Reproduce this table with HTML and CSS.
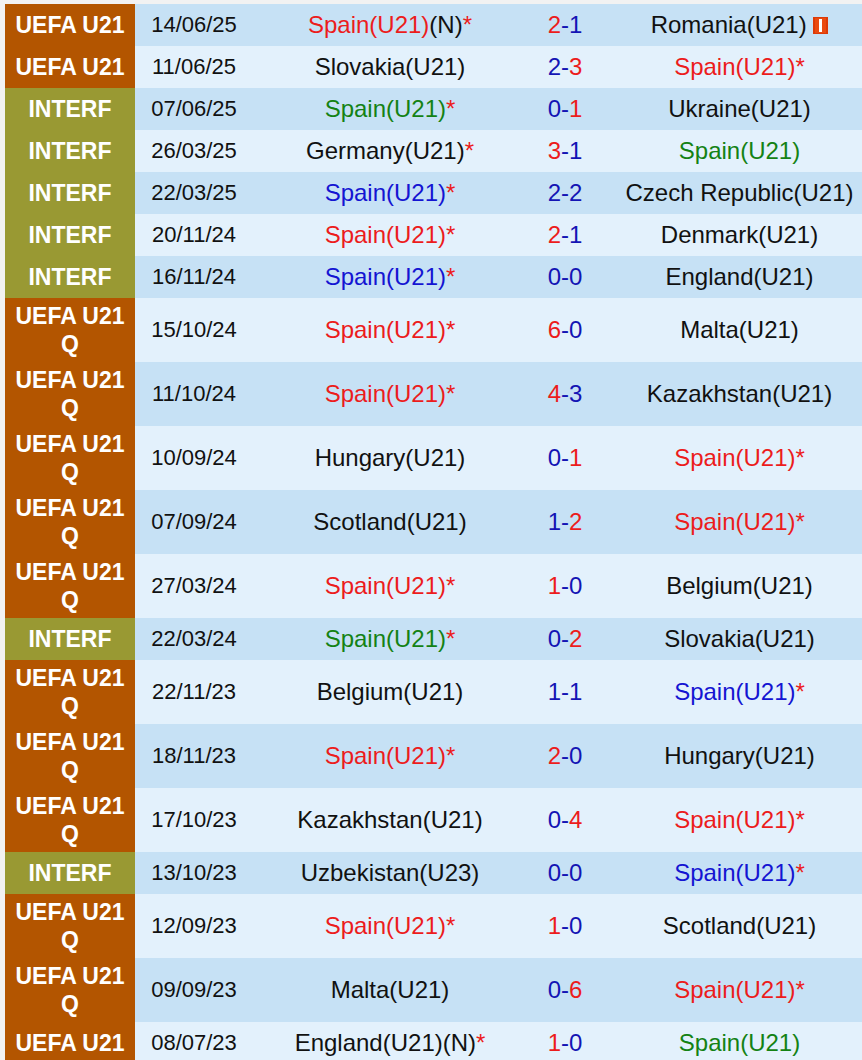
FILE: index.html
```html
<!DOCTYPE html>
<html>
<head>
<meta charset="utf-8">
<link rel="stylesheet" href="styles.css">
</head>
<body>
<table class="matches">
<colgroup>
<col class="c-comp"><col class="c-date"><col class="c-team"><col class="c-score"><col class="c-team2">
</colgroup>
<tbody>
<tr class="dark"><td class="comp uefa">UEFA U21</td><td class="date">14/06/25</td><td class="team"><span class="win">Spain(U21)</span>(N)<span class="star">*</span></td><td class="score"><span class="r">2</span><span class="b">-1</span></td><td class="team">Romania(U21) <svg class="card" width="15" height="17" viewBox="0 0 15 17"><rect x="0" y="0" width="15" height="17" fill="#dc3a08"/><rect x="2" y="1" width="11" height="15" fill="#ea4a10"/><rect x="6" y="2" width="3" height="13" fill="#fff"/></svg></td></tr>
<tr class="light"><td class="comp uefa">UEFA U21</td><td class="date">11/06/25</td><td class="team">Slovakia(U21)</td><td class="score"><span class="b">2-</span><span class="r">3</span></td><td class="team"><span class="win">Spain(U21)</span><span class="star">*</span></td></tr>
<tr class="dark"><td class="comp interf">INTERF</td><td class="date">07/06/25</td><td class="team"><span class="lose">Spain(U21)</span><span class="star">*</span></td><td class="score"><span class="b">0-</span><span class="r">1</span></td><td class="team">Ukraine(U21)</td></tr>
<tr class="light"><td class="comp interf">INTERF</td><td class="date">26/03/25</td><td class="team">Germany(U21)<span class="star">*</span></td><td class="score"><span class="r">3</span><span class="b">-1</span></td><td class="team"><span class="lose">Spain(U21)</span></td></tr>
<tr class="dark"><td class="comp interf">INTERF</td><td class="date">22/03/25</td><td class="team"><span class="draw">Spain(U21)</span><span class="star">*</span></td><td class="score"><span class="b">2-2</span></td><td class="team">Czech Republic(U21)</td></tr>
<tr class="light"><td class="comp interf">INTERF</td><td class="date">20/11/24</td><td class="team"><span class="win">Spain(U21)</span><span class="star">*</span></td><td class="score"><span class="r">2</span><span class="b">-1</span></td><td class="team">Denmark(U21)</td></tr>
<tr class="dark"><td class="comp interf">INTERF</td><td class="date">16/11/24</td><td class="team"><span class="draw">Spain(U21)</span><span class="star">*</span></td><td class="score"><span class="b">0-0</span></td><td class="team">England(U21)</td></tr>
<tr class="light"><td class="comp uefa">UEFA U21<br>Q</td><td class="date">15/10/24</td><td class="team"><span class="win">Spain(U21)</span><span class="star">*</span></td><td class="score"><span class="r">6</span><span class="b">-0</span></td><td class="team">Malta(U21)</td></tr>
<tr class="dark"><td class="comp uefa">UEFA U21<br>Q</td><td class="date">11/10/24</td><td class="team"><span class="win">Spain(U21)</span><span class="star">*</span></td><td class="score"><span class="r">4</span><span class="b">-3</span></td><td class="team">Kazakhstan(U21)</td></tr>
<tr class="light"><td class="comp uefa">UEFA U21<br>Q</td><td class="date">10/09/24</td><td class="team">Hungary(U21)</td><td class="score"><span class="b">0-</span><span class="r">1</span></td><td class="team"><span class="win">Spain(U21)</span><span class="star">*</span></td></tr>
<tr class="dark"><td class="comp uefa">UEFA U21<br>Q</td><td class="date">07/09/24</td><td class="team">Scotland(U21)</td><td class="score"><span class="b">1-</span><span class="r">2</span></td><td class="team"><span class="win">Spain(U21)</span><span class="star">*</span></td></tr>
<tr class="light"><td class="comp uefa">UEFA U21<br>Q</td><td class="date">27/03/24</td><td class="team"><span class="win">Spain(U21)</span><span class="star">*</span></td><td class="score"><span class="r">1</span><span class="b">-0</span></td><td class="team">Belgium(U21)</td></tr>
<tr class="dark"><td class="comp interf">INTERF</td><td class="date">22/03/24</td><td class="team"><span class="lose">Spain(U21)</span><span class="star">*</span></td><td class="score"><span class="b">0-</span><span class="r">2</span></td><td class="team">Slovakia(U21)</td></tr>
<tr class="light"><td class="comp uefa">UEFA U21<br>Q</td><td class="date">22/11/23</td><td class="team">Belgium(U21)</td><td class="score"><span class="b">1-1</span></td><td class="team"><span class="draw">Spain(U21)</span><span class="star">*</span></td></tr>
<tr class="dark"><td class="comp uefa">UEFA U21<br>Q</td><td class="date">18/11/23</td><td class="team"><span class="win">Spain(U21)</span><span class="star">*</span></td><td class="score"><span class="r">2</span><span class="b">-0</span></td><td class="team">Hungary(U21)</td></tr>
<tr class="light"><td class="comp uefa">UEFA U21<br>Q</td><td class="date">17/10/23</td><td class="team">Kazakhstan(U21)</td><td class="score"><span class="b">0-</span><span class="r">4</span></td><td class="team"><span class="win">Spain(U21)</span><span class="star">*</span></td></tr>
<tr class="dark"><td class="comp interf">INTERF</td><td class="date">13/10/23</td><td class="team">Uzbekistan(U23)</td><td class="score"><span class="b">0-0</span></td><td class="team"><span class="draw">Spain(U21)</span><span class="star">*</span></td></tr>
<tr class="light"><td class="comp uefa">UEFA U21<br>Q</td><td class="date">12/09/23</td><td class="team"><span class="win">Spain(U21)</span><span class="star">*</span></td><td class="score"><span class="r">1</span><span class="b">-0</span></td><td class="team">Scotland(U21)</td></tr>
<tr class="dark"><td class="comp uefa">UEFA U21<br>Q</td><td class="date">09/09/23</td><td class="team">Malta(U21)</td><td class="score"><span class="b">0-</span><span class="r">6</span></td><td class="team"><span class="win">Spain(U21)</span><span class="star">*</span></td></tr>
<tr class="light"><td class="comp uefa">UEFA U21</td><td class="date">08/07/23</td><td class="team">England(U21)(N)<span class="star">*</span></td><td class="score"><span class="r">1</span><span class="b">-0</span></td><td class="team"><span class="lose">Spain(U21)</span></td></tr>
</tbody>
</table>
</body>
</html>
```

FILE: styles.css
```css
html, body {
  margin: 0;
  padding: 0;
  overflow: hidden;
  background: #f2f2f2;
}
body {
  padding: 4px 0 0 5px;
}
.matches {
  border-collapse: collapse;
  table-layout: fixed;
  width: 871px;
  font-family: "Liberation Sans", Arial, sans-serif;
  font-size: 24px;
  line-height: 28px;
  color: #111;
}
.c-comp { width: 130px; }
.c-date { width: 118px; }
.c-team { width: 274px; }
.c-score { width: 76px; }
.c-team2 { width: 273px; }
.matches tr { height: 42px; }
.matches td {
  padding: 4px 0;
  text-align: center;
  vertical-align: middle;
  white-space: nowrap;
}
.matches td.date { font-size: 22px; }
.dark { background: #c6e1f5; }
.light { background: #e3f1fc; }
.matches td.comp {
  color: #fff;
  font-weight: bold;
  font-size: 23px;
}
.uefa { background: #b35500; }
.interf { background: #999933; }
.win { color: #ec1c1c; }
.draw { color: #1414d2; }
.lose { color: #148214; }
.star { color: #ec1c1c; }
.r { color: #ec1c1c; }
.b { color: #1414b4; }
.card { vertical-align: -1px; }
```
